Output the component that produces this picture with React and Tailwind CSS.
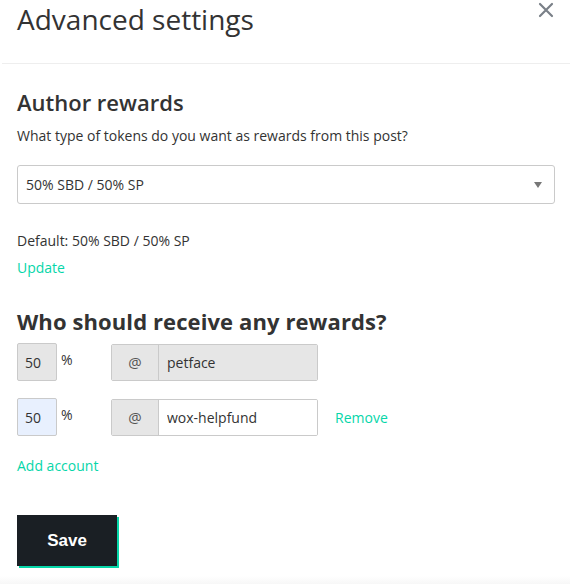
const font = { fontFamily: "'Open Sans', 'Noto Sans', sans-serif" };

function PercentInput({ value, disabled }) {
  return (
    <div className="flex items-start w-[94px]">
      <input
        readOnly
        value={value}
        className={`w-[40px] h-[38px] border border-[#cacaca] rounded-[2px] px-[7px] text-[14px] text-[#333] outline-none ${
          disabled ? "bg-[#e6e6e6]" : "bg-[#e8f0fe]"
        }`}
      />
      <span className="ml-[4px] mt-[6px] text-[14px] text-[#333]">%</span>
    </div>
  );
}

function AccountInput({ value, disabled }) {
  return (
    <div className="flex w-[207px] h-[37px] border border-[#cacaca] rounded-[2px] overflow-hidden">
      <span className="w-[47px] flex items-center justify-center bg-[#e6e6e6] border-r border-[#cacaca] text-[15px] text-[#555]">
        @
      </span>
      <input
        readOnly
        value={value}
        className={`flex-1 min-w-0 px-[8px] text-[14px] text-[#333] outline-none ${
          disabled ? "bg-[#e6e6e6]" : "bg-white"
        }`}
      />
    </div>
  );
}

export default function App() {
  return (
    <div className="w-[570px] h-[584px] bg-white text-[#333] relative overflow-hidden" style={font}>
      {/* Header */}
      <div className="h-[64px] pl-[17px] pt-[1px] border-b border-[#eee] ml-[2px]">
        <h1 className="text-[28px] leading-[36px] font-normal -ml-[2px] text-[#333]">Advanced settings</h1>
      </div>
      <button className="absolute right-[16px] top-[2px] text-[#7a8088]">
        <svg width="16" height="16" viewBox="0 0 16 16" fill="none" stroke="currentColor" strokeWidth="2.2" strokeLinecap="round">
          <path d="M2 2L14 14M14 2L2 14" />
        </svg>
      </button>

      <div className="px-[17px] pr-[15px]">
        {/* Author rewards */}
        <h2 className="mt-[24px] text-[22px] leading-[28px] font-semibold text-[#333]">Author rewards</h2>
        <p className="mt-[11px] text-[14px] leading-[18px]">What type of tokens do you want as rewards from this post?</p>

        <div className="mt-[20px] h-[39px] border border-[#cacaca] rounded-[3px] flex items-center justify-between pl-[8px] pr-[12px]">
          <span className="text-[14px]">50% SBD / 50% SP</span>
          <span className="w-0 h-0 border-l-[4px] border-r-[4px] border-t-[6px] border-l-transparent border-r-transparent border-t-[#777]" />
        </div>

        <p className="mt-[28px] text-[14px] leading-[18px]">Default: 50% SBD / 50% SP</p>
        <p className="mt-[9px] text-[14px] leading-[18px] text-[#06d6a9]">Update</p>

        {/* Beneficiaries */}
        <h2 className="mt-[30px] text-[22px] leading-[28px] font-bold text-[#333] tracking-[0.1px]">Who should receive any rewards?</h2>

        <div className="mt-[8px] flex items-center">
          <PercentInput value="50" disabled />
          <AccountInput value="petface" disabled />
        </div>
        <div className="mt-[17px] flex items-center">
          <PercentInput value="50" />
          <AccountInput value="wox-helpfund" />
          <span className="ml-[17px] text-[14px] text-[#06d6a9]">Remove</span>
        </div>

        <p className="mt-[21px] text-[14px] leading-[18px] text-[#06d6a9]">Add account</p>

        <button
          className="mt-[40px] w-[100px] h-[51px] bg-[#1a1f24] text-white text-[17px] font-bold shadow-[2px_2px_0_#06d6a9]"
          style={{ fontFamily: "'Liberation Sans', Arial, sans-serif" }}
        >
          Save
        </button>
      </div>

      <div className="absolute left-0 right-0 bottom-0 h-[8px] bg-gradient-to-b from-white to-[#f7f7f7]" />
    </div>
  );
}
